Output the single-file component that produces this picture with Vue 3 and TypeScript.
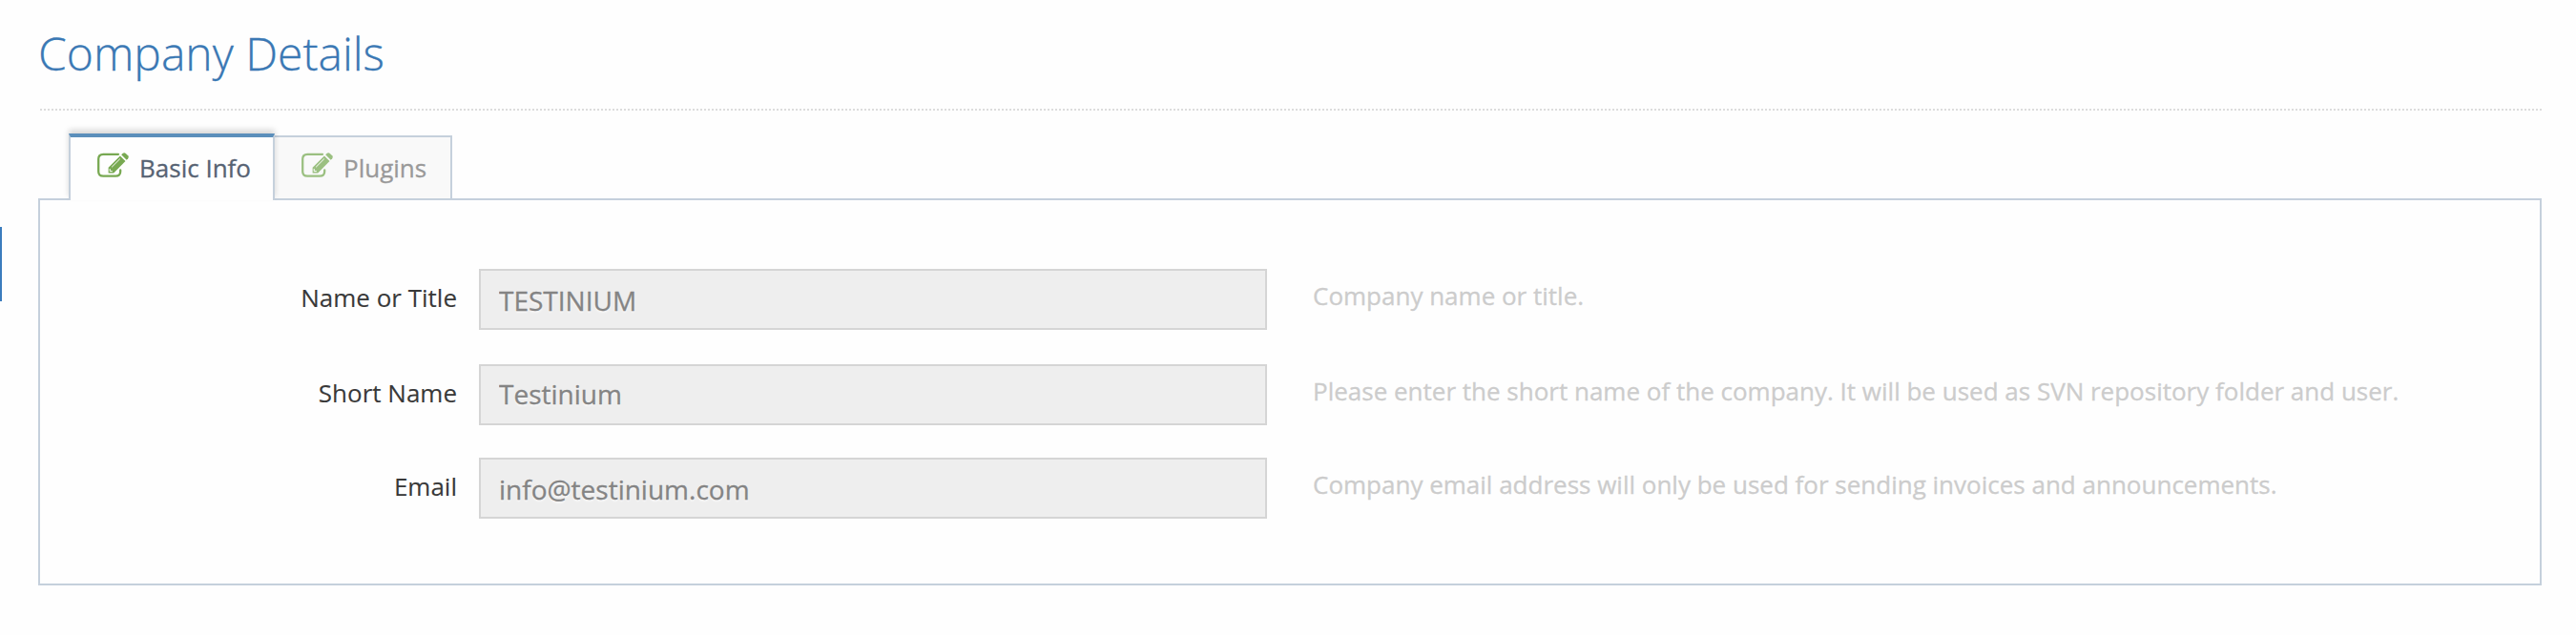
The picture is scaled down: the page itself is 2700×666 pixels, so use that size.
<script setup lang="ts">
interface Tab { id: string; title: string; active: boolean }
interface Field { id: string; label: string; value: string; help: string }

const tabs: Tab[] = [
  { id: 'basic', title: 'Basic Info', active: true },
  { id: 'plugins', title: 'Plugins', active: false },
]

const fields: Field[] = [
  { id: 'name', label: 'Name or Title', value: 'TESTINIUM', help: 'Company name or title.' },
  {
    id: 'short',
    label: 'Short Name',
    value: 'Testinium',
    help: 'Please enter the short name of the company. It will be used as SVN repository folder and user.',
  },
  {
    id: 'email',
    label: 'Email',
    value: 'info@testinium.com',
    help: 'Company email address will only be used for sending invoices and announcements.',
  },
]
</script>

<template>
  <main class="page">
    <span class="sidebar-handle"></span>
    <header class="page-header">
      <h1>Company Details</h1>
    </header>
    <nav class="tabs">
      <a v-for="tab in tabs" :key="tab.id" class="tab" :class="{ active: tab.active }">
        <svg class="icon" viewBox="0 0 33 27" width="33" height="27">
          <path
            d="M22 1.8H6.2Q1.2 1.8 1.2 6.8V19.7Q1.2 24.7 6.2 24.7H19.2Q24.2 24.7 24.2 19.7V18.4"
            fill="none" stroke="currentColor" stroke-width="2.3" stroke-linecap="round"
          />
          <path d="M23.9 3.5L29.5 9.1L17.2 21.4H11.6V15.8Z" fill="currentColor" />
          <path d="M25.2 2.3L26.8 .8Q28.3 -.5 29.8 .9L32.2 3.3Q33.5 4.8 32.2 6.3L30.7 7.8Z" fill="currentColor" />
          <path d="M15.2 15.2L23.8 6.6M13.2 17V19.6H15.8" fill="none" stroke="#fff" stroke-width="1" />
        </svg>
        <span>{{ tab.title }}</span>
      </a>
    </nav>
    <form class="panel">
      <div v-for="field in fields" :key="field.id" class="row" :class="field.id">
        <label :for="field.id">{{ field.label }}</label>
        <input :id="field.id" type="text" :value="field.value" disabled />
        <span class="help">{{ field.help }}</span>
      </div>
    </form>
  </main>
</template>

<style>
body {
  margin: 0;
  background: #fefefe;
}
</style>

<style scoped>
.page {
  position: relative;
  box-sizing: border-box;
  height: 666px;
  padding: 0 36px 0 40px;
  overflow: hidden;
  background: #fefefe;
  font-family: 'Open Sans', sans-serif;
  font-size: 26px;
  color: #393939;
  -webkit-text-stroke: 0.3px currentColor;
}
.sidebar-handle {
  position: absolute;
  left: 0;
  top: 238px;
  width: 2px;
  height: 78px;
  background: #3b7cbd;
}
.page-header {
  box-sizing: border-box;
  height: 116px;
  padding-top: 24px;
  background: repeating-linear-gradient(90deg, #dcdcdc 0 2px, transparent 2px 4px) 2px 100% / 100% 2px no-repeat;
}
h1 {
  margin: 0;
  font-size: 48px;
  line-height: 64px;
  font-weight: 300;
  color: #3a78b4;
}
.tabs {
  display: flex;
  align-items: flex-end;
  height: 94px;
  padding-left: 32px;
}
.tab {
  position: relative;
  box-sizing: border-box;
  display: flex;
  align-items: flex-start;
  width: 188px;
  height: 68px;
  margin-left: -2px;
  padding: 15px 0 0 28px;
  gap: 11px;
  border: 2px solid #c5d0dc;
  background: #f9f9f9;
  color: #999;
  line-height: 34px;
}
.tab.active {
  z-index: 1;
  width: 216px;
  height: 70px;
  margin-left: 0;
  padding: 15px 0 0 28px;
  border-top: 4px solid #5b8fbb;
  border-bottom: 0;
  background: #fefefe;
  color: #576373;
  box-shadow: 0 -4px 6px rgba(0, 0, 0, .15);
}
.icon {
  flex: none;
  margin-top: 1px;
  overflow: visible;
  color: #9bc081;
}
.active .icon {
  color: #78a952;
}
.panel {
  box-sizing: border-box;
  height: 406px;
  margin-top: -2px;
  padding-top: 72px;
  border: 2px solid #c5d0dc;
}
.row {
  display: flex;
  height: 64px;
  margin-bottom: 36px;
}
.row.short {
  margin-bottom: 34px;
}
label {
  width: 437px;
  margin-right: 23px;
  line-height: 36px;
  padding-top: 12px;
  text-align: right;
  -webkit-text-stroke: 0.1px currentColor;
}
input {
  box-sizing: border-box;
  width: 826px;
  height: 64px;
  margin: 0;
  padding: 2px 20px 0 19px;
  border: 2px solid #d5d5d5;
  border-radius: 0;
  background: #eee;
  color: #848484;
  font: 28px 'Open Sans', sans-serif;
  text-shadow: 0 2px 2px rgba(255, 255, 255, .6);
  -webkit-text-stroke: 0.3px currentColor;
}
.row.short input {
  padding: 0 20px 2px 19px;
}
.help {
  padding: 10px 0 0 48px;
  line-height: 36px;
  color: #ccc;
  white-space: nowrap;
}
</style>
